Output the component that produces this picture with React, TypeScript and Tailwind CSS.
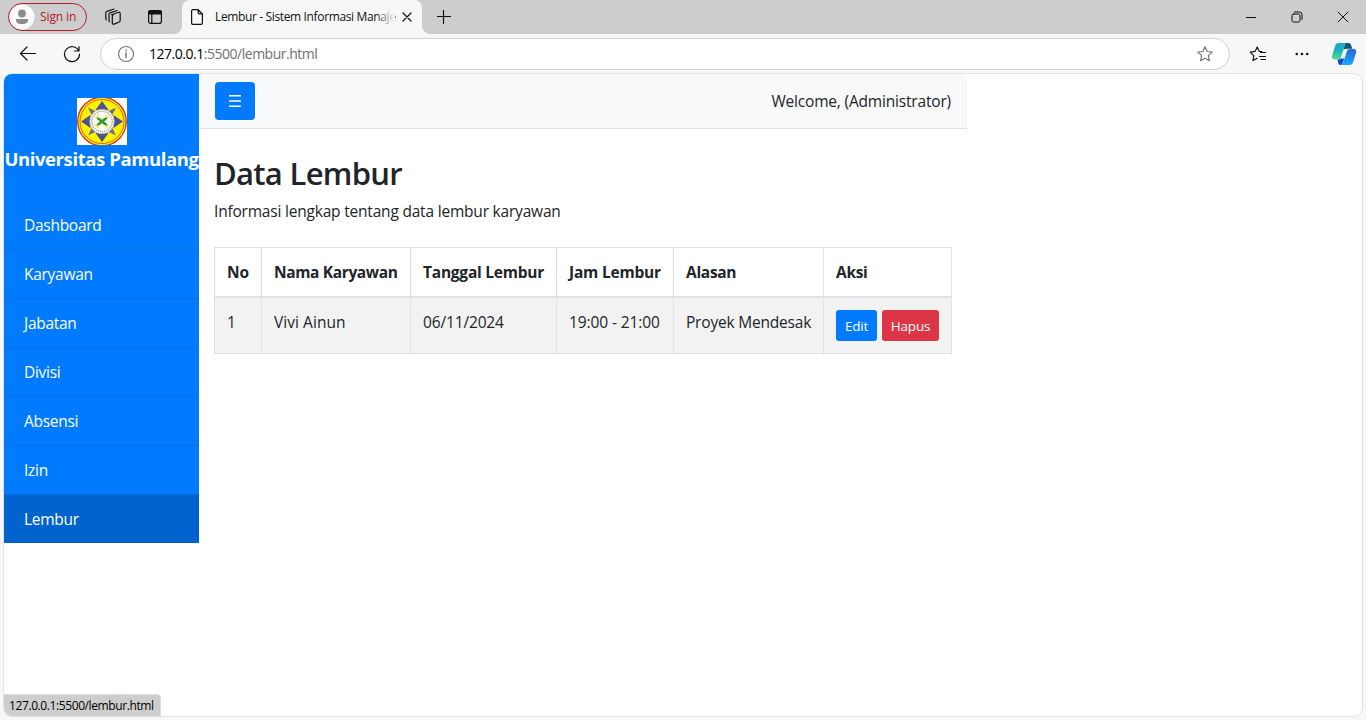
import type { ReactNode } from "react";

const menu = ["Dashboard", "Karyawan", "Jabatan", "Divisi", "Absensi", "Izin", "Lembur"];

const columns = [
  { label: "No", width: "w-[47px]", track: "tracking-normal" },
  { label: "Nama Karyawan", width: "w-[149px]", track: "tracking-[-0.36px]" },
  { label: "Tanggal Lembur", width: "w-[146px]", track: "tracking-[-0.23px]" },
  { label: "Jam Lembur", width: "w-[117px]", track: "tracking-[-0.2px]" },
  { label: "Alasan", width: "w-[150px]", track: "tracking-[-0.3px]" },
  { label: "Aksi", width: "w-[129px]", track: "tracking-[-0.3px]" },
];

function Icon({ size, children, className = "" }: { size: number; children: ReactNode; className?: string }) {
  return (
    <svg width={size} height={size} viewBox={`0 0 ${size} ${size}`} fill="none" stroke="currentColor" strokeWidth="1.2" strokeLinecap="round" strokeLinejoin="round" className={`block shrink-0 ${className}`}>
      {children}
    </svg>
  );
}

function TitleBar() {
  return (
    <header className="flex h-[34px] bg-[#cdcdcd] text-[#111]">
      <div className="flex w-[182px] shrink-0 items-start pl-2 pt-[3px]">
        <div className="flex h-7 w-[79px] shrink-0 items-center rounded-full border border-[#b3202a]">
          <svg width="26" height="26" viewBox="0 0 26 26" className="block shrink-0">
            <circle cx="13" cy="13" r="12.5" fill="#fafafa" />
            <circle cx="13" cy="9.5" r="3.9" fill="#8b8b8b" />
            <path d="M7 15h12v1.2c0 2.4-2.4 3.9-6 3.9s-6-1.500-6-3.900z" fill="#8b8b8b" />
          </svg>
          <span className="ml-[5px] whitespace-nowrap text-[12px] leading-4 tracking-[-0.1px] text-[#b3202a]">Sign in</span>
        </div>
        <Icon size={18} className="ml-[17px] mt-[5px]">
          <path d="M7.600 6.700 14.500 4.300c.9-.3 1.700.2 1.700 1.100v7.100c0 .7-.4 1.200-1 1.500l-5.100 2.100c-1 .4-1.800-.1-1.800-1.100V8.200c0-.7.4-1.200 1-1.500z M5.500 13.700c-.4-.3-.5-.7-.5-1.200V6.300c0-.7.4-1.200 1.100-1.400l7-2.400 M2.300 11.800c-.4-.3-.5-.7-.5-1.200V4.800c0-.7.4-1.200 1.100-1.400l7-2.400" />
        </Icon>
        <svg width="16" height="16" viewBox="0 0 16 16" className="ml-[25px] mt-[6px] block shrink-0" fill="none" stroke="#111" strokeWidth="1.200">
          <rect x="1.600" y="1.600" width="12.800" height="12.800" rx="2.200" />
          <path d="M1.600 5V3.500c0-1 .8-1.900 1.900-1.900h9c1 0 1.900.8 1.900 1.900V5z" fill="#111" />
          <path d="M4.800 5v9.400" />
        </svg>
      </div>
      <div className="relative w-60 shrink-0 rounded-t-lg bg-[#f7f7f7]">
        <svg width="8" height="8" viewBox="0 0 8 8" className="absolute -left-2 bottom-0 fill-[#f7f7f7]"><path d="M8 0v8H0a8 8 0 0 0 8-8z" /></svg>
        <svg width="8" height="8" viewBox="0 0 8 8" className="absolute -right-2 bottom-0 fill-[#f7f7f7]"><path d="M0 0v8h8a8 8 0 0 1-8-8z" /></svg>
        <div className="flex h-[34px] items-center pl-[9px]">
          <svg width="12" height="16" viewBox="0 0 12 16" fill="none" stroke="#111" strokeWidth="1.200" strokeLinejoin="round" className="block shrink-0">
            <path d="M1.800.6h5.400l4.200 4.200v9.300c0 .8-.5 1.300-1.300 1.300H1.800C1 15.400.6 14.900.6 14.100V1.900C.6 1.100 1 .6 1.800.6z M7.200.6v3.200c0 .7.3 1 1 1h3.200" />
          </svg>
          <div className="relative ml-3 w-[180px] whitespace-nowrap text-[12px] leading-4 tracking-[-0.36px]">
            Lembur - Sistem Informasi Manaje
            <div className="absolute inset-y-0 right-0 w-[20px] bg-linear-to-r from-transparent to-[#f7f7f7]" />
          </div>
          <Icon size={10} className="ml-[7px]"><path d="m1 1 8 8M9 1 1 9" /></Icon>
        </div>
      </div>
      <div className="flex flex-1 items-center pl-[15px]">
        <Icon size={14}><path d="M6.500 .5v13M0 6.500h13.500" /></Icon>
      </div>
      <div className="flex items-center pr-[17px]">
        <svg width="10" height="12" viewBox="0 0 10 12" className="block"><path d="M0 6.500h10" stroke="#111" /></svg>
        <Icon size={12} className="ml-[35px]">
          <rect x="1" y="3" width="8" height="8" rx="1.500" strokeWidth="1" />
          <path d="M3.500 1h5A2.500 2.500 0 0 1 11 3.500v5" strokeWidth="1" />
        </Icon>
        <Icon size={12} className="ml-[34px]"><path d="m1 1 10 10M11 1 1 11" strokeWidth="1" /></Icon>
      </div>
    </header>
  );
}

const star = "m9 1.800 2.100 4.700 5.100.6-3.800 3.500 1 5.100L9 13.200l-4.400 2.500 1-5.100-3.800-3.500 5.100-.6z";

function Copilot() {
  return (
    <svg width="26" height="24" viewBox="0 0 26 24" className="block shrink-0">
      <defs>
        <linearGradient id="left" x1="6" y1="1" x2="6" y2="18" gradientUnits="userSpaceOnUse">
          <stop stopColor="#16a9d8" /><stop offset=".45" stopColor="#1bb3b4" /><stop offset="1" stopColor="#5ee08e" />
        </linearGradient>
        <linearGradient id="right" x1="20" y1="6" x2="16" y2="23" gradientUnits="userSpaceOnUse">
          <stop stopColor="#2464d8" /><stop offset=".5" stopColor="#2487ec" /><stop offset="1" stopColor="#12a9fa" />
        </linearGradient>
      </defs>
      <path d="M7.500 1h8c-1 .4-1.500 1.200-1.900 2.400l-3.500 11.500c-.5 1.800-1.600 2.600-3.300 2.600H4c-2.500 0-3.500-1.500-2.800-4L4 4C4.600 2 5.800 1 7.500 1z" fill="url(#left)" />
      <path d="M15 1h2.200c1.500 0 2.400.7 2.900 2.200l1.200 3.600h-3.800c-2 0-4 .2-5.100 1.200l1.200-4.600C14 2.200 14.400 1.400 15 1z" fill="#0a5874" />
      <path d="M6.500 17.500c2 0 3-.4 3.700-1.600h3.300L11.700 21c-.3 1-.8 1.700-1.500 2.100-1.500 0-2.400-.5-2.900-1.800z" fill="#1745d5" />
      <path d="M18.700 23H9.500c1.300 0 2.100-.7 2.600-2.200l3.600-11.400c.5-1.600 1.600-2.500 3.300-2.500h3.200c2.400 0 3.500 1.600 2.800 4l-2.800 9.200c-.6 1.900-1.800 2.900-3.500 2.900z" fill="url(#right)" />
      <path d="M13 8.500c.4-1.100 1-1.600 2-1.600h2.600c-1.300.4-1.800 1.300-2.200 2.500l-2.200 7H9.800c.6-.4.900-1.100 1.200-1.900z" fill="#f7f7f7" />
    </svg>
  );
}

function AddressBar() {
  return (
    <div className="flex h-[39px] items-start bg-[#f7f7f7] text-[#111]">
      <Icon size={18} className="ml-[19px] mt-[11px]"><path d="M16.500 8.500H1.500M8 2 1.500 8.500 8 15" /></Icon>
      <Icon size={18} className="ml-[26px] mt-[11px]"><path d="M15.800 6A7.500 7.500 0 1 0 16.500 9M16 1.500V6h-4.500" /></Icon>
      <div className="ml-[19px] mt-1 flex h-8 w-[1130px] items-center rounded-full border border-[#d1d1d1] bg-white">
        <Icon size={18} className="ml-4 text-[#777]">
          <circle cx="9" cy="9" r="7.500" />
          <path d="M9 8v4.500M9 5.300v.4" strokeWidth="1.500" />
        </Icon>
        <span className="ml-[14px] flex-1 whitespace-nowrap text-[14px] leading-5 tracking-[-0.48px] text-[#717171]">
          <span className="text-black">127.0.0.1</span>:5500/lembur.html
        </span>
        <Icon size={18} className="mr-[15px] text-[#777]"><path d={star} /></Icon>
      </div>
      <svg width="18" height="18" viewBox="0 0 18 18" fill="none" stroke="#111" strokeWidth="1.200" strokeLinejoin="round" strokeLinecap="round" className="ml-[19px] mt-[11px] block">
        <path d="M8.200 13.200 4 15.500l.8-4.900L1.200 7.100l4.900-.7L8.200 2l2.200 4.400 2.400.3M11.500 7.500h5M10.500 11.500h6M12 14.500h4.500" />
      </svg>
      <svg width="14" height="4" viewBox="0 0 14 4" fill="#111" className="ml-[28px] mt-[18px] block">
        <circle cx="1.800" cy="2" r="1.300" /><circle cx="7" cy="2" r="1.300" /><circle cx="12.200" cy="2" r="1.300" />
      </svg>
      <div className="ml-[22px] mt-2"><Copilot /></div>
    </div>
  );
}

function Emblem() {
  return (
    <svg width="50" height="47" viewBox="0 0 50 47" className="block bg-white">
      <circle cx="25" cy="23.500" r="24.300" fill="#fff200" stroke="#dc2b20" strokeWidth="1.300" />
      <circle cx="25" cy="23.500" r="22" fill="none" stroke="#df4b20" strokeWidth=".9" />
      <g fill="#686b91">
        <path d="m11 9.500 8 4-4 4zM39 9.500l-8 4 4 4zM11 37.500l8-4-4-4zM39 37.500l-8-4 4-4z" />
      </g>
      <path d="m25 3 6.500 9h-13zM25 44l6.500-9h-13zM4 23.500 13.500 17v13zM46 23.500 36.500 17v13z" fill="#4c5290" />
      <circle cx="25" cy="23.500" r="12.300" fill="#fff" stroke="#a9a59a" strokeWidth=".7" />
      <circle cx="25" cy="23.500" r="10.200" fill="none" stroke="#a9a9a2" strokeWidth="1.600" strokeDasharray="1.200 .9" />
      <circle cx="25" cy="23.500" r="8.300" fill="#f5ec7a" />
      <g fill="#fff"><circle cx="25" cy="18" r="2.900" /><circle cx="25" cy="29" r="2.900" /><circle cx="19.500" cy="23.500" r="2.900" /><circle cx="30.500" cy="23.500" r="2.900" /></g>
      <path d="M19.500 19.500c3 0 4.500 1.200 5.500 3 1-1.800 2.500-3 5.500-3-.5 2-2 3.200-3.800 4 1.800.8 3.300 2 3.800 4-3 0-4.500-1.200-5.500-3-1 1.800-2.500 3-5.500 3 .5-2 2-3.200 3.800-4-1.800-.8-3.300-2-3.800-4z" fill="#259c27" />
    </svg>
  );
}

function Sidebar() {
  return (
    <aside className="h-[469px] w-[195px] shrink-0 bg-[#007bff] text-white">
      <div className="flex h-[127px] flex-col items-center pt-6">
        <Emblem />
        <h2 className="whitespace-nowrap text-[18.5px] font-bold leading-[27px] tracking-[-0.4px]">Universitas Pamulang</h2>
      </div>
      <nav>
        {menu.map((item) => (
          <a key={item} className={`flex items-center pl-5 pt-px text-[15.5px] tracking-[-0.28px] ${item === "Lembur" ? "h-12 bg-[#0062cc]" : "h-[49px] border-b border-[#006fe6]"}`}>
            {item}
          </a>
        ))}
      </nav>
    </aside>
  );
}

function OvertimeTable() {
  const cell = "border-l border-[#dee2e6] p-0 pl-3 last:border-r";
  return (
    <table className="mt-6 w-[738px] table-fixed border-separate border-spacing-0 text-left text-[15.5px] leading-6">
      <thead>
        <tr className="h-[51px]">
          {columns.map((c) => (
            <th key={c.label} className={`${cell} ${c.width} whitespace-nowrap border-b-2 border-t font-bold ${c.track}`}>{c.label}</th>
          ))}
        </tr>
      </thead>
      <tbody>
        <tr className="h-14 whitespace-nowrap bg-[#f2f2f2] align-top">
          <td className={`${cell} border-b pt-3`}>1</td>
          <td className={`${cell} border-b pt-3 tracking-[0.05px]`}>Vivi Ainun</td>
          <td className={`${cell} border-b pt-3 tracking-[-0.15px]`}>06/11/2024</td>
          <td className={`${cell} border-b pt-3 tracking-[-0.1px]`}>19:00 - 21:00</td>
          <td className={`${cell} border-b pt-3 tracking-[-0.2px]`}>Proyek Mendesak</td>
          <td className={`${cell} border-b pt-3`}>
            <div className="flex gap-[5px] text-[13.5px] text-white">
              <button className="h-[31px] w-[41px] rounded-[3px] bg-[#007bff] pt-px tracking-[-0.2px]">Edit</button>
              <button className="h-[31px] w-[57px] rounded-[3px] bg-[#dc3545] pt-px tracking-[-0.2px]">Hapus</button>
            </div>
          </td>
        </tr>
      </tbody>
    </table>
  );
}

export default function App() {
  return (
    <div className="flex h-[720px] w-[1366px] flex-col overflow-hidden bg-[#f7f7f7] font-['Open_Sans','Noto_Sans',sans-serif] text-[#212529]">
      <TitleBar />
      <AddressBar />
      <div className="relative mx-[3px] flex h-[644px] shrink-0 overflow-hidden rounded-[9px] border border-[#e2e2e2] bg-white">
        <Sidebar />
        <div className="w-[768px]">
          <div className="flex h-[55px] items-center justify-between border-b border-[#dee2e6] bg-[#f8f9fa] px-4">
            <button className="flex h-[38px] w-10 items-center justify-center rounded-[4px] bg-[#007bff]">
              <svg width="12" height="12" viewBox="0 0 12 12" className="block" stroke="white" strokeWidth="1.500"><path d="M0 .75h12M0 6h12M0 11.250h12" /></svg>
            </button>
            <span className="whitespace-nowrap pt-px text-[15.5px] tracking-[-0.18px]">Welcome, (Administrator)</span>
          </div>
          <main className="pl-[15px] pt-[25px]">
            <h1 className="text-[31px] font-semibold leading-[38px] tracking-[-0.7px]">Data Lembur</h1>
            <p className="mt-[7px] text-[15.5px] leading-6 tracking-[-0.2px]">Informasi lengkap tentang data lembur karyawan</p>
            <OvertimeTable />
          </main>
        </div>
        <div className="absolute bottom-0 left-0 flex h-[22px] w-[157px] items-center rounded-tr-[4px] border-r border-t border-[#dedede] bg-[#cdcdcd] pl-[5px] text-[12px] tracking-[-0.4px] text-black">
          127.0.0.1:5500/lembur.html
        </div>
      </div>
    </div>
  );
}
